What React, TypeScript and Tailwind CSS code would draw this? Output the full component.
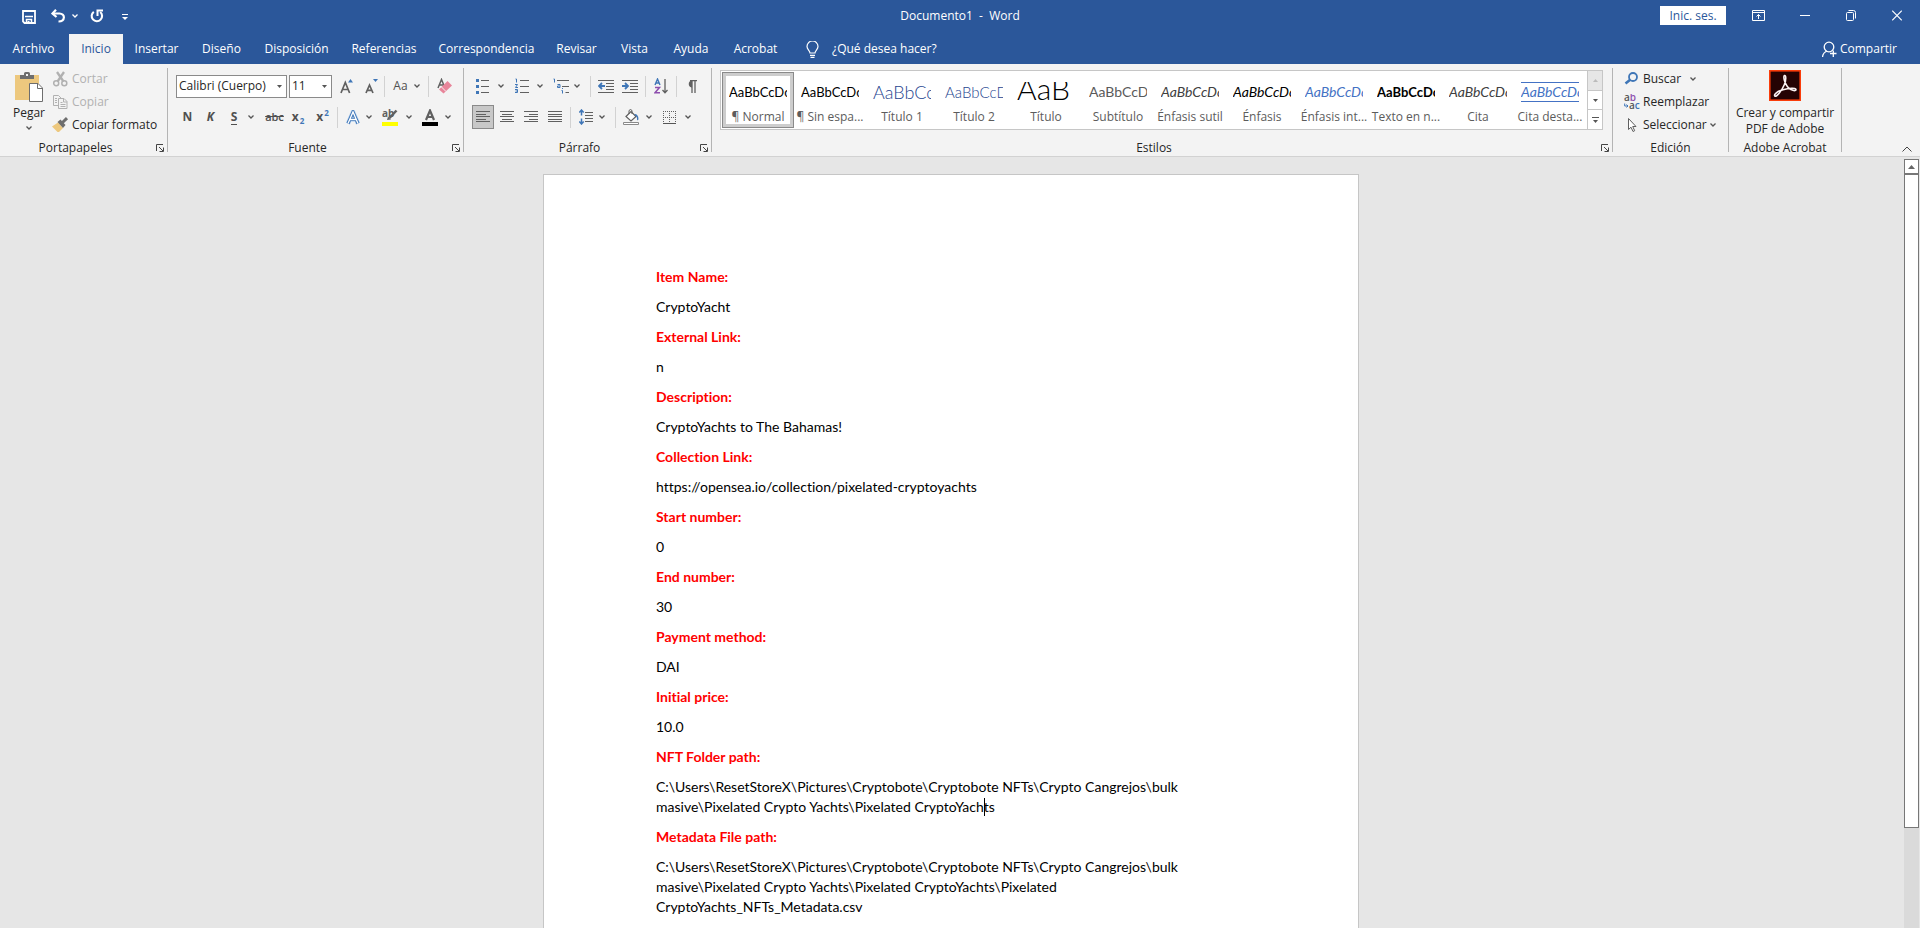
import React from "react";
import type { ReactNode } from "react";

function Svg({ w, h, children, className = "" }: { w: number; h: number; children: ReactNode; className?: string }) {
  return (
    <svg width={w} height={h} viewBox={`0 0 ${w} ${h}`} fill="none" aria-hidden="true" className={`shrink-0 ${className}`}>
      {children}
    </svg>
  );
}

function Chevron({ color = "#555" }: { color?: string }) {
  return (
    <Svg w={6} h={4}>
      <path d="M.5 .5 3 3 5.500 .5" stroke={color} strokeWidth="1.300" />
    </Svg>
  );
}

function Divider() {
  return <div className="h-[21px] w-px shrink-0 bg-[#d2d2d2]" />;
}

function Tool({ label, className, children }: { label: string; className: string; children: ReactNode }) {
  return (
    <button type="button" aria-label={label} className={`flex h-6 shrink-0 items-center justify-center ${className}`}>
      {children}
    </button>
  );
}

function Launcher({ label }: { label: string }) {
  return (
    <button type="button" aria-label={label} className="flex w-4 shrink-0 items-center pl-[5px]">
      <Svg w={8} h={8}>
        <path d="M.5 7V.5H7M3 3l4 4M7.500 3.500v4h-4" stroke="#444" />
      </Svg>
    </button>
  );
}

function Group({ name, launcher, className, children }: { name: string; launcher?: boolean; className: string; children: ReactNode }) {
  return (
    <>
      <section aria-label={name} className={`flex flex-col ${className}`}>
        <div className="h-[76px]">{children}</div>
        <div className="flex h-4 items-center">
          <h2 className="flex-1 text-center leading-4">{name}</h2>
          {launcher && <Launcher label={`Opciones de ${name}`} />}
        </div>
      </section>
      <div className="my-1 w-px shrink-0 bg-[#b4b4b4]" />
    </>
  );
}

/* ---------- title bar ---------- */

function TitleBar() {
  return (
    <header className="grid h-[34px] grid-cols-[1fr_auto_1fr] items-start">
      <div className="flex h-[26px] items-end pl-[22px]">
        <button type="button" aria-label="Guardar" className="mb-0.5">
          <Svg w={14} h={14}>
            <path d="M1 1h12v12H2.500L1 11.500z" stroke="#fff" strokeWidth="1.800" />
            <path d="M3 6.500h8" stroke="#fff" strokeWidth="1.500" />
            <path d="M4.500 13V9.500h5V13" stroke="#fff" strokeWidth="1.500" />
            <path d="M5.500 11h2v2h-2z" fill="#fff" />
          </Svg>
        </button>
        <button type="button" aria-label="Deshacer" className="mb-[3px] ml-[15px]">
          <Svg w={14} h={14}>
            <path d="M5 .8 1.500 4.500 5.500 8" stroke="#fff" strokeWidth="2.200" />
            <path d="M2 4.500h6.500c6 0 6 8-1 8" stroke="#fff" strokeWidth="2.200" />
          </Svg>
        </button>
        <button type="button" aria-label="Opciones de deshacer" className="mb-2 ml-[7px]">
          <Chevron color="#fff" />
        </button>
        <button type="button" aria-label="Repetir" className="mb-[3px] ml-3">
          <Svg w={14} h={14}>
            <path d="M3.800 2.800A5.200 5.200 0 1 0 10.200 3" stroke="#fff" strokeWidth="2.100" />
            <path d="M7.500 7V1.500H13" stroke="#fff" strokeWidth="2" />
          </Svg>
        </button>
        <button type="button" aria-label="Personalizar barra de acceso rápido" className="mb-1.5 ml-[18px]">
          <Svg w={6} h={6}>
            <path d="M0 .5h6" stroke="#fff" />
            <path d="M0 3h6L3 6z" fill="#fff" />
          </Svg>
        </button>
      </div>
      <h1 className="pt-2 leading-4 text-white">
        Documento1&nbsp; -&nbsp; Word
      </h1>
      <div className="flex justify-end pr-[18px]">
        <button type="button" className="mt-1.5 h-[19px] w-[66px] bg-white leading-[18px] text-[#2b579a]">
          Inic. ses.
        </button>
        <button type="button" aria-label="Opciones de presentación de la cinta" className="mt-[9px] ml-[26px] h-3">
          <Svg w={13} h={11}>
            <path d="M.5.500h12v10H.500zM.5 2.500h12" stroke="#fff" />
            <path d="M6.500 9V4.500M4.500 6.500l2-2 2 2" stroke="#fff" />
          </Svg>
        </button>
        <button type="button" aria-label="Minimizar" className="mt-[9px] ml-[35px] h-3">
          <Svg w={10} h={11}>
            <path d="M0 5.500h10" stroke="#fff" />
          </Svg>
        </button>
        <button type="button" aria-label="Restaurar" className="mt-[9px] ml-9 h-3">
          <Svg w={10} h={11}>
            <rect x=".5" y="2.500" width="7" height="8" rx="1" stroke="#fff" />
            <path d="M2.500.5h5q2 0 2 2v6" stroke="#fff" />
          </Svg>
        </button>
        <button type="button" aria-label="Cerrar" className="mt-[9px] ml-9 h-3">
          <Svg w={10} h={11}>
            <path d="M.2.700l9.600 9.600M9.800.700.2 10.300" stroke="#fff" strokeWidth="1.200" />
          </Svg>
        </button>
      </div>
    </header>
  );
}

const TABS = [
  { name: "Archivo", width: "w-[69px] pr-0.5" },
  { name: "Inicio", width: "w-[54px]" },
  { name: "Insertar", width: "w-[67px]" },
  { name: "Diseño", width: "w-[63px]" },
  { name: "Disposición", width: "w-[87px]" },
  { name: "Referencias", width: "w-[88px]" },
  { name: "Correspondencia", width: "w-[117px]" },
  { name: "Revisar", width: "w-[63px]" },
  { name: "Vista", width: "w-[53px]" },
  { name: "Ayuda", width: "w-[60px]" },
  { name: "Acrobat", width: "w-[69px]" },
];

function TabBar() {
  return (
    <nav className="flex h-[30px] items-stretch text-white">
      {TABS.map((t) => (
        <button
          key={t.name}
          type="button"
          className={`shrink-0 text-center whitespace-nowrap ${t.width} ${t.name === "Inicio" ? "bg-[#f3f3f3] text-[#2b579a]" : ""}`}
        >
          {t.name}
        </button>
      ))}
      <button type="button" className="ml-4 flex items-center gap-[13px] whitespace-nowrap">
        <Svg w={13} h={17}>
          <path d="M4 12c0-2-3-3.500-3-6.500a5.500 5.500 0 0 1 11 0C12 8.500 9 10 9 12z" stroke="#fff" strokeWidth="1.200" />
          <path d="M4 14.300h5M4.500 16.300h4" stroke="#fff" strokeWidth="1.200" />
        </Svg>
        ¿Qué desea hacer?
      </button>
      <button type="button" className="mr-[23px] ml-auto flex items-center gap-[3px]">
        <Svg w={15} h={17}>
          <circle cx="7" cy="6" r="4.800" stroke="#fff" strokeWidth="1.300" />
          <path d="M.5 16c.3-3 2-5 4.500-6M8 12.500h6.500M11.300 9.500V16" stroke="#fff" strokeWidth="1.300" />
        </Svg>
        Compartir
      </button>
    </nav>
  );
}

/* ---------- clipboard ---------- */

function ClipboardGroup() {
  return (
    <Group name="Portapapeles" launcher className="w-[167px] shrink-0">
      <div className="flex">
        <button type="button" className="ml-1.5 flex w-[46px] flex-col items-center pt-2">
          <Svg w={28} h={30}>
            <path d="M0 3h24v25H0z" fill="#edc87e" />
            <path d="M5 3h4V1.500Q9 0 10.500 0h3Q15 0 15 1.500V3h4v4H5z" fill="#6e6e6e" />
            <path d="M11 2h2v2h-2z" fill="#f3f3f3" />
            <path d="M14.500 11.500h8.500l4.500 4.500v13.500h-13z" fill="#fff" stroke="#6e6e6e" />
            <path d="M22.500 11.500V16.500h5" stroke="#6e6e6e" />
          </Svg>
          <span className="mt-[3px] leading-4">Pegar</span>
          <span className="mt-[5px] flex">
            <Chevron />
          </span>
        </button>
        <div className="pt-[3px]">
          <button type="button" disabled className="flex h-[23px] items-center gap-[3px] text-[#b1b1b1]">
            <Svg w={17} h={16}>
              <path d="M5 1l6.500 9.500M12 1 5.500 10.500" stroke="#b1b1b1" strokeWidth="2.300" />
              <circle cx="4.200" cy="12.200" r="2.500" stroke="#b1b1b1" strokeWidth="1.500" />
              <circle cx="12.300" cy="12.200" r="2.500" stroke="#b1b1b1" strokeWidth="1.500" />
            </Svg>
            Cortar
          </button>
          <button type="button" disabled className="flex h-[23px] items-center gap-[3px] text-[#b1b1b1]">
            <Svg w={17} h={16}>
              <path d="M6 11.500H1.500v-10h5L9 4" stroke="#b1b1b1" />
              <path d="M6.500 4.500h5.500l3 3v7H6.500zM11.500 4.500V8H15M3 4.500h2M3 6.500h2M3 8.500h2M8.500 8.500h2M8.500 10.500h5M8.500 12.500h5" stroke="#b1b1b1" />
            </Svg>
            Copiar
          </button>
          <button type="button" className="flex h-[23px] items-center gap-[3px] whitespace-nowrap">
            <Svg w={17} h={16}>
              <path d="M0 9.500 6 5.500 11 11 7 15H5.500z" fill="#edc87e" />
              <path d="M5.500 5 8.500 2.500 13.500 8 11 11z" fill="#6e6e6e" />
              <path d="M10.500 5.500 15 1.200" stroke="#6e6e6e" strokeWidth="3" />
            </Svg>
            Copiar formato
          </button>
        </div>
      </div>
    </Group>
  );
}

/* ---------- font ---------- */

function Combo({ label, value, className }: { label: string; value: string; className: string }) {
  return (
    <div className={`relative h-[23px] shrink-0 ${className}`}>
      <select aria-label={label} className="block h-full w-full appearance-none border border-[#8a8a8a] bg-white pl-[2px] text-[12px] text-[#262626]">
        <option>{value}</option>
      </select>
      <svg width="5" height="3" viewBox="0 0 5 3" aria-hidden="true" className="pointer-events-none absolute top-2.5 right-[5px]">
        <path d="M0 0h5L2.500 3z" fill="#555" />
      </svg>
    </div>
  );
}

function FontGroup() {
  return (
    <Group name="Fuente" launcher className="w-[295px] shrink-0">
      <div className="flex flex-col gap-[7px] pt-2.5 pl-2 text-[#505050]">
        <div className="flex items-center">
          <Combo label="Fuente" value="Calibri (Cuerpo)" className="w-[111px]" />
          <Combo label="Tamaño de fuente" value="11" className="ml-0.5 w-[43px]" />
          <Tool label="Aumentar tamaño" className="ml-0.5 w-[25px]">
            <Svg w={14} h={15}>
              <path d="M1 14 5.300 3.500 9.600 14M2.500 10.500h5.600" stroke="#606060" strokeWidth="1.700" />
              <path d="M8 3.500h5L10.500 0z" fill="#3f76b7" />
            </Svg>
          </Tool>
          <Tool label="Disminuir tamaño" className="w-[25px]">
            <Svg w={14} h={15}>
              <path d="M1 14 4.500 6 8 14M2.200 11.300h4.600" stroke="#606060" strokeWidth="1.700" />
              <path d="M8 0h5l-2.500 3z" fill="#3f76b7" />
            </Svg>
          </Tool>
          <Divider />
          <Tool label="Cambiar mayúsculas y minúsculas" className="w-[43px] gap-1.5">
            <span>Aa</span>
            <Chevron />
          </Tool>
          <Divider />
          <Tool label="Borrar formato" className="w-[31px]">
            <Svg w={15} h={16}>
              <path d="M1 10 4.500 1.500 8 10M2.200 7h4.600" stroke="#606060" strokeWidth="1.500" />
              <path d="M2 11.500 10.500 3 15 7.500 6.500 15.500z" fill="#e8859a" />
              <path d="M4.500 9 9 13.500" stroke="#f3f3f3" />
            </Svg>
          </Tool>
        </div>
        <div className="flex items-center">
          <Tool label="Negrita" className="w-[23px]">
            <b>N</b>
          </Tool>
          <Tool label="Cursiva" className="w-[23px]">
            <b className="italic">K</b>
          </Tool>
          <Tool label="Subrayado" className="w-[41px] gap-[11px]">
            <b className="border-b border-[#505050] leading-[14px]">S</b>
            <Chevron />
          </Tool>
          <Tool label="Tachado" className="w-[23px]">
            <span className="text-[11px] font-semibold line-through">abc</span>
          </Tool>
          <Tool label="Subíndice" className="w-6 gap-px">
            <b>x</b>
            <b className="pt-2 text-[8px] text-[#3f76b7]">2</b>
          </Tool>
          <Tool label="Superíndice" className="mr-0.5 w-[25px] gap-px">
            <b>x</b>
            <b className="pb-2 text-[8px] text-[#3f76b7]">2</b>
          </Tool>
          <Divider />
          <Tool label="Efectos de texto" className="w-[42px] gap-1.5">
            <Svg w={14} h={15}>
              <path d="M2 13.500 7 2l5 11.500M4 9.500h6" stroke="#bcd5f0" strokeWidth="4.500" />
              <path d="M2 13.500 7 2l5 11.500M4 9.500h6" stroke="#3f76b7" strokeWidth="3.200" />
              <path d="M2 13.500 7 2l5 11.500M4 9.500h6" stroke="#fff" strokeWidth="1.300" />
            </Svg>
            <Chevron />
          </Tool>
          <Tool label="Color de resaltado" className="w-[34px] gap-[7px]">
            <Svg w={17} h={17}>
              <text x="0" y="8" fontSize="10" fontWeight="700" fill="#606060">ab</text>
              <path d="M14.500 1.500 7.500 9" stroke="#606060" strokeWidth="2.500" />
              <path d="M6 7.500 9 10.500 5 11z" fill="#606060" />
              <path d="M0 13h16v4H0z" fill="#ff0" />
            </Svg>
            <Chevron />
          </Tool>
          <Tool label="Color de fuente" className="w-[45px] gap-[7px]">
            <Svg w={16} h={17}>
              <path d="M4 11 8 1.500l4 9.500M5.500 8h5" stroke="#606060" strokeWidth="2.200" />
              <path d="M0 13h16v4H0z" fill="#000" />
            </Svg>
            <Chevron />
          </Tool>
        </div>
      </div>
    </Group>
  );
}

/* ---------- paragraph ---------- */

function ParagraphGroup() {
  return (
    <Group name="Párrafo" launcher className="w-[247px] shrink-0">
      <div className="flex flex-col gap-[7px] pt-2.5 pl-2">
        <div className="flex items-center">
          <Tool label="Viñetas" className="w-9 gap-[9px]">
            <Svg w={13} h={15}>
              <path d="M0 0h3v3H0zM0 6h3v3H0zM0 12h3v3H0z" fill="#3f76b7" />
              <path d="M5 1.500h8M5 7.500h8M5 13.500h8" stroke="#606060" />
            </Svg>
            <Chevron />
          </Tool>
          <Tool label="Numeración" className="w-[42px] gap-2">
            <Svg w={14} h={16}>
              <path d="M.5 1h1v3.500M0 6.500h2.500L.5 9.500H3M0 11.500h2.500v3H0M.5 13h2" stroke="#3f76b7" />
              <path d="M5 2.500h9M5 8.500h9M5 14.500h9" stroke="#606060" />
            </Svg>
            <Chevron />
          </Tool>
          <Tool label="Lista multinivel" className="w-[33px] gap-[5px]">
            <Svg w={16} h={16}>
              <path d="M.5 1h1v3.500M4.500 6.500h2.500v3h-2.500v-1.500h2M9.500 10v1M8.500 12.500h1v3" stroke="#3f76b7" />
              <path d="M4 2.500h12M9 8.500h7M12.500 14.500H16" stroke="#606060" />
            </Svg>
            <Chevron />
          </Tool>
          <div className="w-[7px]" />
          <Divider />
          <Tool label="Disminuir sangría" className="ml-[3px] w-6">
            <Svg w={16} h={14}>
              <path d="M0 1.500h16M8 4.500h8M8 7.500h8M8 10.500h8M0 13.500h16" stroke="#606060" />
              <path d="M7 7H1M4 4 1 7l3 3" stroke="#3f76b7" strokeWidth="1.800" />
            </Svg>
          </Tool>
          <Tool label="Aumentar sangría" className="mr-[3px] w-6">
            <Svg w={16} h={14}>
              <path d="M0 1.500h16M8 4.500h8M8 7.500h8M8 10.500h8M0 13.500h16" stroke="#606060" />
              <path d="M0 7h6M3 4l3 3-3 3" stroke="#3f76b7" strokeWidth="1.800" />
            </Svg>
          </Tool>
          <Divider />
          <Tool label="Ordenar" className="w-[30px]">
            <Svg w={14} h={16}>
              <path d="M1 7 3.500 1 6 7M1.800 5h3.500" stroke="#3f76b7" strokeWidth="1.400" />
              <path d="M1 9.500h4.500L1 14.700h5" stroke="#8e4fae" strokeWidth="1.500" />
              <path d="M11 1v13.500M8.500 12l2.500 2.700 2.500-2.700" stroke="#606060" strokeWidth="1.300" />
            </Svg>
          </Tool>
          <Divider />
          <Tool label="Mostrar todo" className="w-[30px]">
            <Svg w={10} h={13}>
              <path d="M4.500 7.500a3.600 3.600 0 0 1 0-7H5v7z" fill="#606060" />
              <path d="M3 .7h7M5 1v12M8 1v12" stroke="#606060" strokeWidth="1.300" />
            </Svg>
          </Tool>
        </div>
        <div className="flex items-center">
          <Tool label="Alinear a la izquierda" className="mr-px w-[22px] border border-[#8a8a8a] bg-[#c8c8c8]">
            <Svg w={14} h={12}>
              <path d="M0 .5h14M0 3.500h10M0 5.500h14M0 8.500h10M0 10.500h14" stroke="#606060" />
            </Svg>
          </Tool>
          <Tool label="Centrar" className="w-6">
            <Svg w={14} h={12}>
              <path d="M0 .5h14M2 3.500h10M0 5.500h14M2 8.500h10M0 10.500h14" stroke="#606060" />
            </Svg>
          </Tool>
          <Tool label="Alinear a la derecha" className="w-6">
            <Svg w={14} h={12}>
              <path d="M0 .5h14M5 3.500h9M0 5.500h14M5 8.500h9M0 10.500h14" stroke="#606060" />
            </Svg>
          </Tool>
          <Tool label="Justificar" className="mr-[3px] w-6">
            <Svg w={14} h={12}>
              <path d="M0 .5h14M0 3.500h14M0 5.500h14M0 8.500h14M0 10.500h14" stroke="#606060" />
            </Svg>
          </Tool>
          <Divider />
          <Tool label="Interlineado" className="mr-0.5 w-[42px] gap-1.5">
            <Svg w={14} h={16}>
              <path d="M2.500 1v5.500M2.500 9.500V15M.3 3.500 2.500 1l2.200 2.500M.3 12.500 2.500 15l2.200-2.500" stroke="#3f76b7" strokeWidth="1.500" />
              <path d="M6 3.500h8M6 6.500h8M6 9.500h8M6 12.500h8" stroke="#606060" />
            </Svg>
            <Chevron />
          </Tool>
          <Divider />
          <Tool label="Sombreado" className="w-[43px] gap-[7px]">
            <Svg w={16} h={16}>
              <path d="M3 7.500 8 2.500l5 5-5 4.500z" fill="#fff" stroke="#606060" strokeWidth="1.200" />
              <path d="M6 5V1.500q1.500-2 3 0V5" stroke="#606060" />
              <path d="M11.500 5q4 0 4 5.500l-1.500 1q.5-4-2-5z" fill="#3f76b7" />
              <path d="M.5 13.500h15v2H.5z" fill="#fff" stroke="#8a8a8a" />
            </Svg>
            <Chevron />
          </Tool>
          <Tool label="Bordes" className="w-9 gap-[9px]">
            <Svg w={13} h={13}>
              <path d="M0 .5h13M0 6.500h13M.5 0v12M6.500 0v12M12.500 0v12" stroke="#606060" strokeDasharray="1 1" />
              <path d="M0 12.500h13" stroke="#555" />
            </Svg>
            <Chevron />
          </Tool>
        </div>
      </div>
    </Group>
  );
}

/* ---------- styles ---------- */

const STYLES = [
  { name: "¶ Normal", sample: "AaBbCcDc", look: "text-[13px] leading-5 text-black" },
  { name: "¶ Sin espa...", sample: "AaBbCcDc", look: "text-[13px] leading-5 text-black" },
  { name: "Título 1", sample: "AaBbCc", look: "text-[18px] leading-5 font-light text-[#1f4690]" },
  { name: "Título 2", sample: "AaBbCcD", look: "text-[15px] leading-5 font-light text-[#1f4690]" },
  { name: "Título", sample: "AaB", look: "text-[30px] leading-3 font-light text-black" },
  { name: "Subtítulo", sample: "AaBbCcD", look: "text-[14px] leading-5 text-[#5a5a5a]" },
  { name: "Énfasis sutil", sample: "AaBbCcDc", look: "text-[14px] leading-5 italic text-[#404040]" },
  { name: "Énfasis", sample: "AaBbCcDc", look: "text-[14px] leading-5 italic text-black" },
  { name: "Énfasis int...", sample: "AaBbCcDc", look: "text-[14px] leading-5 italic text-[#4472c4]" },
  { name: "Texto en n...", sample: "AaBbCcDc", look: "text-[13px] leading-5 font-bold text-black" },
  { name: "Cita", sample: "AaBbCcDc", look: "text-[14px] leading-5 italic text-[#404040]" },
  { name: "Cita desta...", sample: "AaBbCcDc", look: "text-[14px] leading-[18px] italic text-[#4472c4] border-y border-[#4472c4]" },
];

function StylesGroup() {
  return (
    <Group name="Estilos" launcher className="min-w-0 flex-1">
      <div className="pt-1.5 pr-[9px] pl-2">
        <div className="flex h-[60px] border border-[#c6c6c6] bg-white">
          <div className="flex min-w-0 flex-1 overflow-hidden p-px">
            {STYLES.map((s, i) => (
              <button
                key={s.name}
                type="button"
                className={`flex w-[72px] shrink-0 flex-col items-center text-[#5c5c5c] ${i === 0 ? "border border-[#8a8a8a] ring-[3px] ring-[#cdcdcd] ring-inset" : "border border-transparent"}`}
              >
                <span className={`mt-[9px] block h-5 w-[58px] overflow-hidden text-left font-[Lato,sans-serif] whitespace-nowrap ${s.look}`}>
                  {s.sample}
                </span>
                <span className="mt-[7px] leading-4 whitespace-nowrap">{s.name}</span>
              </button>
            ))}
          </div>
          <div className="flex w-[15px] shrink-0 flex-col divide-y divide-[#c6c6c6] border-l border-[#c6c6c6]">
            <button type="button" aria-label="Fila anterior" className="flex flex-1 items-center justify-center bg-[#e6e6e6]">
              <Svg w={5} h={3}>
                <path d="M0 3h5L2.500 0z" fill="#bbb" />
              </Svg>
            </button>
            <button type="button" aria-label="Fila siguiente" className="flex flex-1 items-center justify-center">
              <Svg w={5} h={3}>
                <path d="M0 0h5L2.500 3z" fill="#555" />
              </Svg>
            </button>
            <button type="button" aria-label="Más estilos" className="flex flex-1 items-center justify-center">
              <Svg w={7} h={6}>
                <path d="M0 .5h7" stroke="#555" />
                <path d="M1 3h5L3.500 6z" fill="#555" />
              </Svg>
            </button>
          </div>
        </div>
      </div>
    </Group>
  );
}

/* ---------- editing and acrobat ---------- */

function EditingGroup() {
  return (
    <Group name="Edición" className="w-[115px] shrink-0">
      <div className="flex flex-col items-start pt-[3px] pl-[11px]">
        <button type="button" className="flex h-[23px] items-center gap-[3px]">
          <Svg w={16} h={16}>
            <circle cx="9" cy="6" r="4" stroke="#3f76b7" strokeWidth="1.800" />
            <path d="M6.200 8.800 1.500 12.500" stroke="#3f76b7" strokeWidth="2.600" />
          </Svg>
          Buscar
          <span className="ml-1.5">
            <Chevron />
          </span>
        </button>
        <button type="button" className="flex h-[23px] items-center gap-[3px]">
          <Svg w={16} h={16}>
            <text x="0" y="7" fontSize="10" fontWeight="600" fill="#555">
              a<tspan fill="#8e4fae">b</tspan>
            </text>
            <text x="5" y="15" fontSize="10" fontWeight="600" fill="#555">
              a<tspan fill="#3f76b7">c</tspan>
            </text>
            <path d="M.7 9.500V12H4M2.500 10.500 4 12l-1.500 1.500" stroke="#3f76b7" />
          </Svg>
          Reemplazar
        </button>
        <button type="button" className="flex h-[23px] items-center gap-[3px]">
          <Svg w={16} h={16}>
            <path d="M4.500 1.500v11L7 10.200l2 4.300 1.700-.8-2-4.200H12z" fill="#fff" stroke="#606060" />
          </Svg>
          Seleccionar
          <Chevron />
        </button>
      </div>
    </Group>
  );
}

function AcrobatGroup() {
  return (
    <Group name="Adobe Acrobat" className="w-28 shrink-0">
      <button type="button" className="flex w-full flex-col items-center pt-1.5">
        <Svg w={32} h={31}>
          <rect x=".8" y=".8" width="30.400" height="29.400" fill="#250303" stroke="#fa3c0a" strokeWidth="1.600" />
          <path
            d="M5.800 26c-1.300-1.600 2.700-4.800 8.200-6.300s13-2.200 13-.1c0 2.200-5.500.7-8.500-2.800S14 6 15.500 5.500s1.900 4.200-.2 9.300S7.300 27.800 5.800 26z"
            stroke="#fbf3f3"
            strokeWidth="1.600"
          />
        </Svg>
        <span className="mt-1 leading-4">
          Crear y compartir
          <br />
          PDF de Adobe
        </span>
      </button>
    </Group>
  );
}

function Ribbon() {
  return (
    <div className="flex h-[93px] border-b border-[#d2d2d2] bg-[#f3f3f3] text-[#262626]">
      <ClipboardGroup />
      <FontGroup />
      <ParagraphGroup />
      <StylesGroup />
      <EditingGroup />
      <AcrobatGroup />
      <div className="flex w-[78px] shrink-0 items-end justify-end pr-2 pb-1">
        <button type="button" aria-label="Contraer la cinta de opciones">
          <Svg w={10} h={6}>
            <path d="M.5 5.500 5 1l4.500 4.500" stroke="#444" />
          </Svg>
        </button>
      </div>
    </div>
  );
}

/* ---------- document ---------- */

const FIELDS: { label: string; value: ReactNode }[] = [
  { label: "Item Name:", value: "CryptoYacht" },
  { label: "External Link:", value: "n" },
  { label: "Description:", value: "CryptoYachts to The Bahamas!" },
  { label: "Collection Link:", value: "https://opensea.io/collection/pixelated-cryptoyachts" },
  { label: "Start number:", value: "0" },
  { label: "End number:", value: "30" },
  { label: "Payment method:", value: "DAI" },
  { label: "Initial price:", value: "10.0" },
  {
    label: "NFT Folder path:",
    value: (
      <>
        C:\Users\ResetStoreX\Pictures\Cryptobote\Cryptobote NFTs\Crypto Cangrejos\bulk
        <br />
        masive\Pixelated Crypto Yachts\Pixelated CryptoYach
        <span className="relative">
          <span className="absolute top-0 left-0 h-[18px] w-px bg-black" />
        </span>
        ts
      </>
    ),
  },
  {
    label: "Metadata File path:",
    value: (
      <>
        C:\Users\ResetStoreX\Pictures\Cryptobote\Cryptobote NFTs\Crypto Cangrejos\bulk
        <br />
        masive\Pixelated Crypto Yachts\Pixelated CryptoYachts\Pixelated
        <br />
        CryptoYachts_NFTs_Metadata.csv
      </>
    ),
  },
];

function Workspace() {
  return (
    <div className="flex min-h-0 flex-1 bg-[#e6e6e6]">
      <main className="flex min-w-0 flex-1 justify-center overflow-hidden pt-[17px]">
        <article className="min-h-full w-[816px] border border-b-0 border-[#c6c6c6] bg-white px-28 pt-[92px] font-[Lato,sans-serif] text-[14px] leading-5 text-black [font-variant-ligatures:none]">
          {FIELDS.map((f) => (
            <React.Fragment key={f.label}>
              <p className="mb-2.5 font-bold text-[#ff0000]">{f.label}</p>
              <p className="mb-2.5">{f.value}</p>
            </React.Fragment>
          ))}
        </article>
      </main>
      <div className="flex w-[18px] shrink-0 flex-col pt-0.5 pl-0.5">
        <button type="button" aria-label="Desplazar hacia arriba" className="flex h-[15px] w-[15px] shrink-0 items-center justify-center border border-[#777] bg-white">
          <Svg w={7} h={4}>
            <path d="M0 4h7L3.500 0z" fill="#666" />
          </Svg>
        </button>
        <div className="w-[15px] grow-[13] border border-[#777] bg-white" />
        <div className="w-[15px] grow-[2] bg-[#dadada]" />
      </div>
    </div>
  );
}

export default function App() {
  return (
    <div className="flex h-screen flex-col overflow-hidden font-['Open_Sans','Noto_Sans',sans-serif] text-[12px] leading-4">
      <div className="bg-[#2b579a]">
        <TitleBar />
        <TabBar />
      </div>
      <Ribbon />
      <Workspace />
    </div>
  );
}
